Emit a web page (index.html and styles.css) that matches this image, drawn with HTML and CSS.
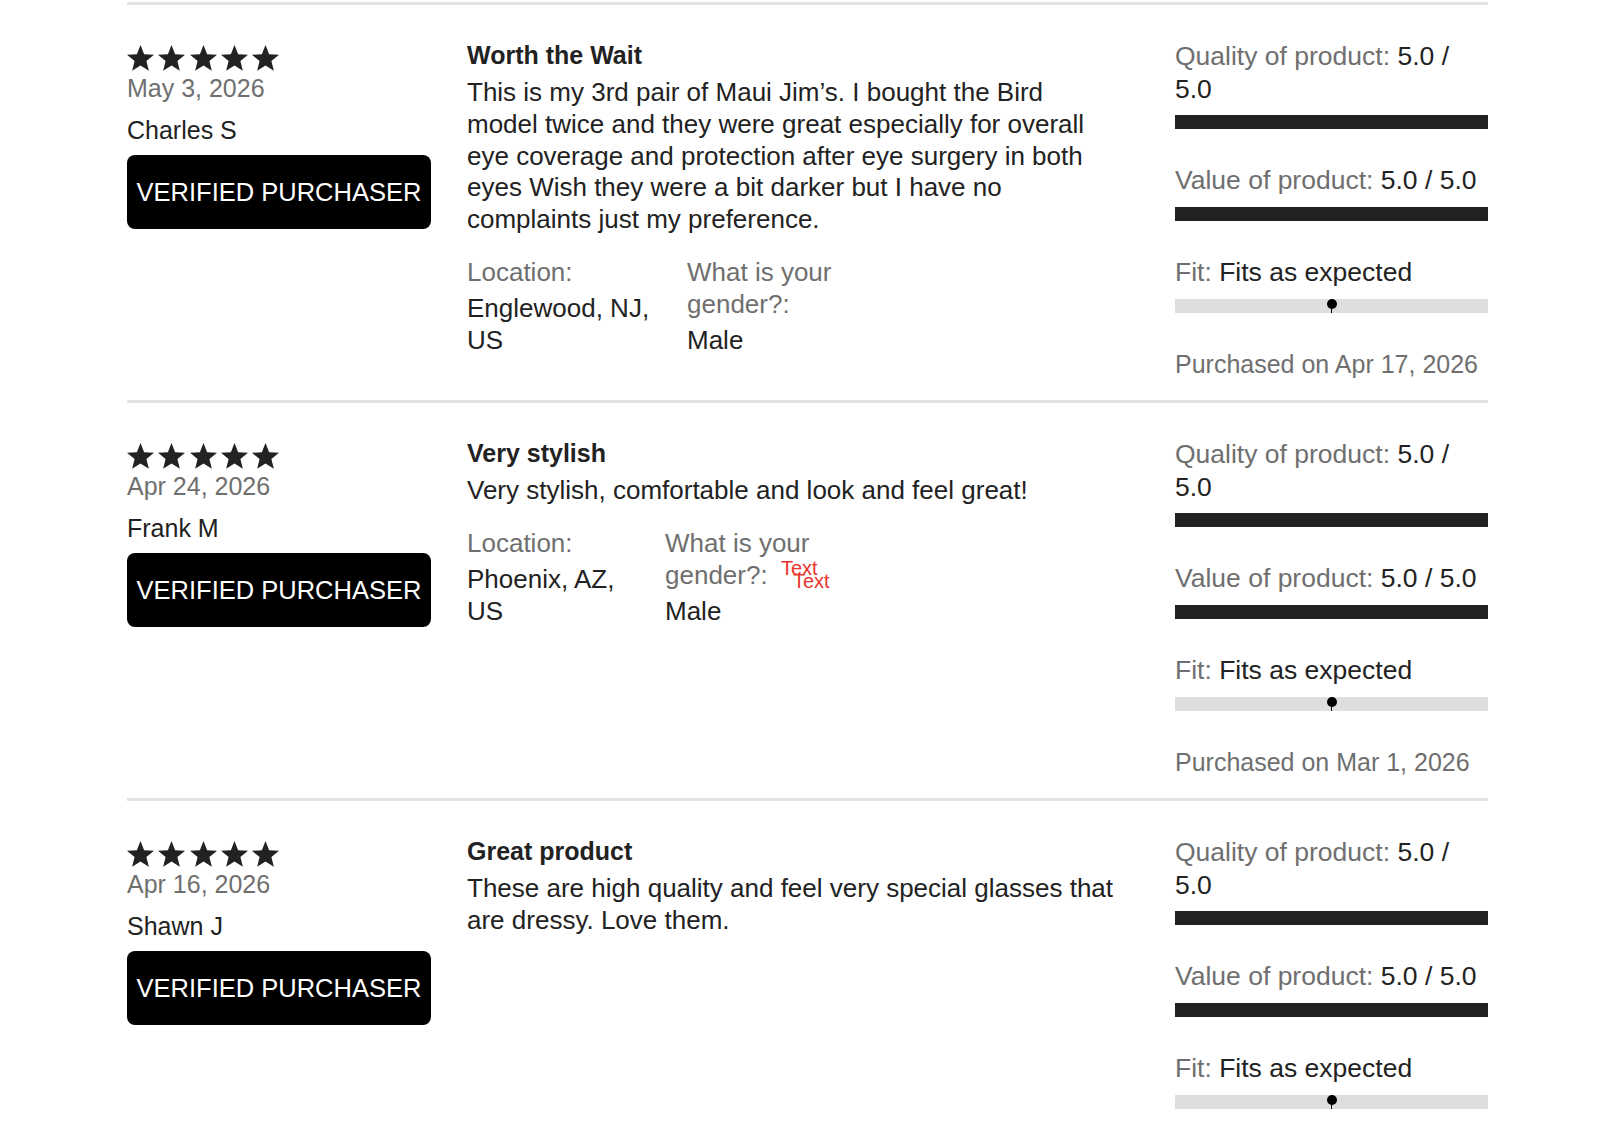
FILE: index.html
```html
<!DOCTYPE html>
<html lang="en">
<head>
<meta charset="utf-8">
<title>Reviews</title>
<link rel="stylesheet" href="styles.css">
</head>
<body>
<svg class="defs" width="0" height="0" aria-hidden="true">
  <symbol id="star" viewBox="0 0 27 27">
    <polygon points="13.5,0 17.14,9.18 27,9.81 19.4,16.12 21.85,25.69 13.5,20.4 5.15,25.69 7.6,16.12 0,9.81 9.86,9.18"/>
  </symbol>
</svg>

<main class="reviews">

  <article class="review">
    <div class="review-author">
      <div class="stars" aria-label="5 out of 5 stars">
        <svg><use href="#star"/></svg><svg><use href="#star"/></svg><svg><use href="#star"/></svg><svg><use href="#star"/></svg><svg><use href="#star"/></svg>
      </div>
      <div class="date">May 3, 2026</div>
      <div class="author">Charles S</div>
      <div class="badge">VERIFIED PURCHASER</div>
    </div>
    <div class="review-body">
      <h3 class="title">Worth the Wait</h3>
      <p class="text">This is my 3rd pair of Maui Jim’s. I bought the Bird model twice and they were great especially for overall eye coverage and protection after eye surgery in both eyes Wish they were a bit darker but I have no complaints just my preference.</p>
      <div class="attrs">
        <div class="attr">
          <div class="attr-label">Location:</div>
          <div class="attr-value">Englewood, NJ, US</div>
        </div>
        <div class="attr">
          <div class="attr-label">What is your gender?:</div>
          <div class="attr-value">Male</div>
        </div>
      </div>
    </div>
    <div class="review-ratings">
      <div class="metric">
        <div class="metric-text"><span class="metric-label">Quality of product:</span> <span class="metric-value">5.0 /</span> <span class="metric-value">5.0</span></div>
        <div class="bar"><div class="bar-fill" style="width:100%"></div></div>
      </div>
      <div class="metric">
        <div class="metric-text"><span class="metric-label">Value of product:</span> <span class="metric-value">5.0 /</span> <span class="metric-value">5.0</span></div>
        <div class="bar"><div class="bar-fill" style="width:100%"></div></div>
      </div>
      <div class="metric">
        <div class="metric-text"><span class="metric-label">Fit:</span> <span class="metric-value">Fits as expected</span></div>
        <div class="bar bar--fit"><span class="bar-marker" style="left:50%"></span></div>
      </div>
      <div class="purchased">Purchased on Apr 17, 2026</div>
    </div>
  </article>

  <article class="review">
    <div class="review-author">
      <div class="stars" aria-label="5 out of 5 stars">
        <svg><use href="#star"/></svg><svg><use href="#star"/></svg><svg><use href="#star"/></svg><svg><use href="#star"/></svg><svg><use href="#star"/></svg>
      </div>
      <div class="date">Apr 24, 2026</div>
      <div class="author">Frank M</div>
      <div class="badge">VERIFIED PURCHASER</div>
    </div>
    <div class="review-body">
      <h3 class="title">Very stylish</h3>
      <p class="text">Very stylish, comfortable and look and feel great!</p>
      <div class="attrs">
        <div class="attr attr--compact">
          <div class="attr-label">Location:</div>
          <div class="attr-value">Phoenix, AZ, US</div>
        </div>
        <div class="attr">
          <div class="attr-label">What is your gender?:</div>
          <div class="attr-value">Male</div>
          <span class="annotation annotation--a">Text</span>
          <span class="annotation annotation--b">Text</span>
        </div>
      </div>
    </div>
    <div class="review-ratings">
      <div class="metric">
        <div class="metric-text"><span class="metric-label">Quality of product:</span> <span class="metric-value">5.0 /</span> <span class="metric-value">5.0</span></div>
        <div class="bar"><div class="bar-fill" style="width:100%"></div></div>
      </div>
      <div class="metric">
        <div class="metric-text"><span class="metric-label">Value of product:</span> <span class="metric-value">5.0 /</span> <span class="metric-value">5.0</span></div>
        <div class="bar"><div class="bar-fill" style="width:100%"></div></div>
      </div>
      <div class="metric">
        <div class="metric-text"><span class="metric-label">Fit:</span> <span class="metric-value">Fits as expected</span></div>
        <div class="bar bar--fit"><span class="bar-marker" style="left:50%"></span></div>
      </div>
      <div class="purchased">Purchased on Mar 1, 2026</div>
    </div>
  </article>

  <article class="review">
    <div class="review-author">
      <div class="stars" aria-label="5 out of 5 stars">
        <svg><use href="#star"/></svg><svg><use href="#star"/></svg><svg><use href="#star"/></svg><svg><use href="#star"/></svg><svg><use href="#star"/></svg>
      </div>
      <div class="date">Apr 16, 2026</div>
      <div class="author">Shawn J</div>
      <div class="badge">VERIFIED PURCHASER</div>
    </div>
    <div class="review-body">
      <h3 class="title">Great product</h3>
      <p class="text">These are high quality and feel very special glasses that are dressy. Love them.</p>
    </div>
    <div class="review-ratings">
      <div class="metric">
        <div class="metric-text"><span class="metric-label">Quality of product:</span> <span class="metric-value">5.0 /</span> <span class="metric-value">5.0</span></div>
        <div class="bar"><div class="bar-fill" style="width:100%"></div></div>
      </div>
      <div class="metric">
        <div class="metric-text"><span class="metric-label">Value of product:</span> <span class="metric-value">5.0 /</span> <span class="metric-value">5.0</span></div>
        <div class="bar"><div class="bar-fill" style="width:100%"></div></div>
      </div>
      <div class="metric">
        <div class="metric-text"><span class="metric-label">Fit:</span> <span class="metric-value">Fits as expected</span></div>
        <div class="bar bar--fit"><span class="bar-marker" style="left:50%"></span></div>
      </div>
    </div>
  </article>

</main>
</body>
</html>
```

FILE: styles.css
```css
html, body {
  margin: 0;
  background: #fff;
}

body {
  font-family: "Liberation Sans", Arial, sans-serif;
  color: #222;
  padding: 2px 112px 0 127px;
}

.defs {
  position: absolute;
  width: 0;
  height: 0;
  overflow: hidden;
}

.review {
  display: flex;
  align-items: flex-start;
  border-top: 3px solid #e4e4e4;
  padding: 35px 0 19.5px;
}

/* left column */
.review-author {
  width: 304px;
  flex: none;
}

.stars {
  display: flex;
  gap: 4.3px;
  margin-top: 5px;
  height: 27px;
}

.stars svg {
  width: 27px;
  height: 27px;
  fill: #222;
}

.date {
  margin-top: 1px;
  font-size: 25px;
  line-height: 30px;
  color: #6f6f6f;
}

.author {
  margin-top: 12px;
  font-size: 25px;
  line-height: 30px;
  color: #222;
}

.badge {
  margin-top: 10px;
  width: 304px;
  height: 74px;
  line-height: 74px;
  background: #000;
  color: #fff;
  border-radius: 8px;
  text-align: center;
  font-size: 25.5px;
}

/* middle column */
.review-body {
  width: 650px;
  flex: none;
  margin-left: 36px;
}

.title {
  margin: 0;
  font-size: 25px;
  line-height: 30px;
  font-weight: 700;
}

.text {
  margin: 7px 0 0;
  font-size: 26px;
  line-height: 31.8px;
}

.attrs {
  display: flex;
  margin-top: 20px;
  font-size: 26px;
  line-height: 32px;
}

.attr {
  position: relative;
  width: 220px;
  padding-right: 8px;
  box-sizing: border-box;
}

.attr--compact {
  width: 198px;
}

.attr-label {
  color: #6f6f6f;
}

.attr-value {
  margin-top: 4px;
}

.annotation {
  position: absolute;
  color: #e8352e;
  font-size: 20px;
  line-height: 20px;
}

.annotation--a {
  left: 116px;
  top: 31px;
}

.annotation--b {
  left: 128px;
  top: 44px;
}

/* right column */
.review-ratings {
  width: 313px;
  flex: none;
  margin-left: auto;
  font-size: 26.5px;
  line-height: 32.5px;
}

.metric + .metric {
  margin-top: 35px;
}

.metric-label {
  color: #6f6f6f;
}

.bar {
  height: 14px;
  margin-top: 10px;
  background: #dedede;
}

.bar-fill {
  height: 100%;
  background: #222;
}

.bar--fit {
  position: relative;
  margin-top: 11px;
}

.bar-marker {
  position: absolute;
  top: 0;
  width: 10px;
  height: 10px;
  margin-left: -5px;
  border-radius: 50%;
  background: #000;
}

.bar-marker::after {
  content: "";
  position: absolute;
  left: 4.5px;
  top: 9px;
  width: 1px;
  height: 5px;
  background: #000;
}

.purchased {
  margin-top: 35px;
  font-size: 25px;
  color: #6f6f6f;
}
```
